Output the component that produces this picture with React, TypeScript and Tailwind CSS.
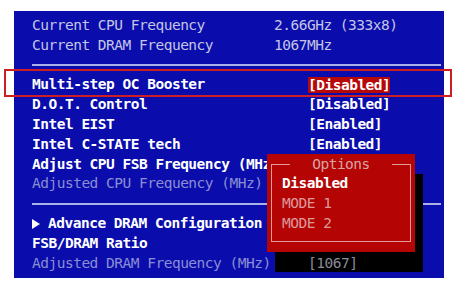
import React from 'react'

type Tone = 'info' | 'setting' | 'dim'

interface Row {
  label: React.ReactNode
  value?: string
  valueAt?: number
  tone: Tone
  selected?: boolean
  valueOnTop?: boolean
}

const toneClass: Record<Tone, string> = {
  info: 'text-[#c4c6e4] font-normal',
  setting: 'text-white font-bold',
  dim: 'text-[#8a8ed4] font-normal',
}

const topRows: Row[] = [
  { label: 'Current CPU Frequency', value: '2.66GHz (333x8)', valueAt: 242, tone: 'info' },
  { label: 'Current DRAM Frequency', value: '1067MHz', valueAt: 242, tone: 'info' },
]

const midRows: Row[] = [
  { label: 'Multi-step OC Booster', value: '[Disabled]', tone: 'setting', selected: true },
  { label: 'D.O.T. Control', value: '[Disabled]', tone: 'setting' },
  { label: 'Intel EIST', value: '[Enabled]', tone: 'setting' },
  { label: 'Intel C-STATE tech', value: '[Enabled]', tone: 'setting' },
  { label: 'Adjust CPU FSB Frequency (MHz)', tone: 'setting' },
  { label: 'Adjusted CPU Frequency (MHz)', tone: 'dim' },
]

const bottomRows: Row[] = [
  {
    label: (
      <span className="flex items-center">
        <svg width="8" height="10" viewBox="0 0 8 10" className="mr-[8px]">
          <path d="M0 0 L8 5 L0 10 Z" fill="#ffffff" />
        </svg>
        Advance DRAM Configuration
      </span>
    ),
    tone: 'setting',
  },
  { label: 'FSB/DRAM Ratio', tone: 'setting' },
  { label: 'Adjusted DRAM Frequency (MHz)', value: '[1067]', tone: 'dim', valueOnTop: true },
]

function BiosRow({ row }: { row: Row }) {
  return (
    <div className={`flex h-[19.8px] items-center whitespace-nowrap ${toneClass[row.tone]}`}>
      <div className="shrink-0" style={{ width: row.valueAt ?? 276 }}>
        {row.label}
      </div>
      {row.value && (
        <span
          className={`${row.selected ? 'bg-[#b60808] text-white font-bold leading-[16px]' : ''} ${
            row.valueOnTop ? 'relative z-20 text-[#8c8c98]' : ''
          }`}
        >
          {row.value}
        </span>
      )}
    </div>
  )
}

function Separator() {
  return (
    <div className="flex h-[19.8px] items-center pr-[3px]">
      <div className="h-[2px] w-full bg-[#aab0e8]" />
    </div>
  )
}

export default function App() {
  return (
    <div
      className="relative h-[282px] w-[456px] overflow-hidden bg-white text-[14.5px] tracking-[-0.5px]"
      style={{ fontFamily: '"DejaVu Sans Mono", "Liberation Mono", monospace' }}
    >
      <div className="ml-[14px] mt-[11px] h-[267px] w-[430px] bg-[#0a0cac] pl-[18px] pt-[5px]">
        {topRows.map((r, i) => (
          <BiosRow key={i} row={r} />
        ))}
        <Separator />
        {midRows.map((r, i) => (
          <BiosRow key={i} row={r} />
        ))}
        <Separator />
        {bottomRows.map((r, i) => (
          <BiosRow key={i} row={r} />
        ))}
      </div>

      {/* selection outline */}
      <div className="pointer-events-none absolute left-[4px] top-[69px] h-[28px] w-[448px] border-2 border-[#cc1e24]" />

      {/* options popup */}
      <div className="absolute left-[267px] top-[154px] z-10 h-[98px] w-[148px] bg-[#b40404] shadow-[8px_20px_0_#000]">
        <div className="absolute left-[4px] top-[10px] h-[78px] w-[140px] border border-[#e49a9a]" />
        <div className="absolute left-0 top-0 flex h-[20px] w-full justify-center">
          <span className="bg-[#b40404] px-[22px] leading-[20px] text-[#d8a4a4]">Options</span>
        </div>
        <div className="absolute left-[15px] top-[19px]">
          <div className="h-[20px] leading-[20px] font-bold text-white">Disabled</div>
          <div className="h-[20px] leading-[20px] text-[#dc9a9a]">MODE 1</div>
          <div className="h-[20px] leading-[20px] text-[#dc9a9a]">MODE 2</div>
        </div>
      </div>
    </div>
  )
}
